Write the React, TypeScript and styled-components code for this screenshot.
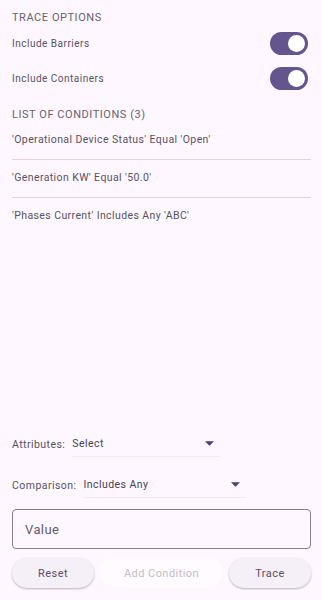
import styled, {createGlobalStyle} from 'styled-components';

const GlobalStyle = createGlobalStyle`
  html, body {
    margin: 0;
    padding: 0;
    background: #fef7ff;
  }
  * {
    box-sizing: border-box;
  }
`;

const conditions = [
  "'Operational Device Status' Equal 'Open'",
  "'Generation KW' Equal '50.0'",
  "'Phases Current' Includes Any 'ABC'",
];

const Page = styled.div`
  height: 600px;
  display: flex;
  flex-direction: column;
  padding: 0 11px 12px 12px;
  background: #fef7ff;
  font-family: Roboto, 'Noto Sans', sans-serif;
  color: #57525f;
`;

const SectionTitle = styled.div<{$top: number}>`
  margin-top: ${(p) => p.$top}px;
  font-size: 11px;
  line-height: 16px;
  letter-spacing: 0.55px;
  text-transform: uppercase;
  color: #67626d;
`;

const OptionRow = styled.div`
  height: 35px;
  display: flex;
  align-items: center;
  justify-content: space-between;
  padding-right: 3px;
  font-size: 10px;
  letter-spacing: 0.5px;
`;

const Track = styled.div<{$on: boolean}>`
  width: 38px;
  height: 23px;
  border-radius: 12px;
  background: ${(p) => (p.$on ? '#65558f' : '#e6e0e9')};
  display: flex;
  align-items: center;
  justify-content: ${(p) => (p.$on ? 'flex-end' : 'flex-start')};
  padding: 0 3px;
`;

const Thumb = styled.div`
  width: 17px;
  height: 17px;
  border-radius: 50%;
  background: #ffffff;
`;

const ConditionList = styled.div`
  margin-top: -1px;
`;

const ConditionItem = styled.div<{$last: boolean}>`
  padding: 10px 0 ${(p) => (p.$last ? 0 : 11)}px;
  font-size: 10.5px;
  line-height: 16px;
  letter-spacing: 0.4px;
  border-bottom: ${(p) => (p.$last ? 'none' : '1px solid #dcd6e0')};
`;

const Spacer = styled.div`
  flex: 1;
`;

const FieldRow = styled.div<{$gap: number}>`
  display: flex;
  align-items: flex-end;
  margin-bottom: ${(p) => p.$gap}px;
  font-size: 10.5px;
  letter-spacing: 0.45px;
`;

const FieldLabel = styled.span`
  line-height: 16px;
  padding-bottom: 4px;
  margin-right: 7px;
`;

const Dropdown = styled.div<{$width: number}>`
  width: ${(p) => p.$width}px;
  height: 24px;
  display: flex;
  align-items: center;
  justify-content: space-between;
  padding: 0 6px 3px 0;
  border-bottom: 1px solid #f0eaf2;
  color: #46414f;
`;

const Caret = styled.svg`
  width: 9px;
  height: 5px;
  fill: #4a3d73;
`;

const ValueBox = styled.div`
  height: 40px;
  border: 1px solid #85808a;
  border-radius: 4px;
  display: flex;
  align-items: center;
  padding: 0 12px;
  font-size: 13px;
  letter-spacing: 0.4px;
  color: #625d69;
  margin-bottom: 9px;
`;

const ButtonBar = styled.div`
  display: flex;
  gap: 6px;
`;

const Button = styled.button<{$width: number; $disabled?: boolean}>`
  width: ${(p) => p.$width}px;
  height: 30px;
  border: 0;
  border-radius: 15px;
  font-family: Roboto, 'Noto Sans', sans-serif;
  font-size: 11px;
  letter-spacing: 0.45px;
  cursor: pointer;
  background: ${(p) => (p.$disabled ? '#fffbff' : '#f5eff8')};
  color: ${(p) => (p.$disabled ? '#c2bdc6' : '#57525f')};
  box-shadow: ${(p) =>
    p.$disabled ? 'none' : '0 1px 2px rgba(0, 0, 0, 0.22), 0 1px 3px rgba(0, 0, 0, 0.07)'};
`;

const Toggle = ({on}: {on: boolean}) => (
  <Track $on={on}>
    <Thumb />
  </Track>
);

const DropIcon = () => (
  <Caret viewBox="0 0 10 5">
    <path d="M0 0 L10 0 L5 5 Z" />
  </Caret>
);

const App = () => {
  return (
    <>
      <GlobalStyle />
      <Page>
        <SectionTitle $top={10}>Trace Options</SectionTitle>
        <OptionRow>
          Include Barriers
          <Toggle on />
        </OptionRow>
        <OptionRow>
          Include Containers
          <Toggle on />
        </OptionRow>
        <SectionTitle $top={11}>List of Conditions (3)</SectionTitle>
        <ConditionList>
          {conditions.map((c, i) => (
            <ConditionItem key={c} $last={i === conditions.length - 1}>
              {c}
            </ConditionItem>
          ))}
        </ConditionList>
        <Spacer />
        <FieldRow $gap={17}>
          <FieldLabel>Attributes:</FieldLabel>
          <Dropdown $width={148}>
            Select
            <DropIcon />
          </Dropdown>
        </FieldRow>
        <FieldRow $gap={11}>
          <FieldLabel>Comparison:</FieldLabel>
          <Dropdown $width={163}>
            Includes Any
            <DropIcon />
          </Dropdown>
        </FieldRow>
        <ValueBox>Value</ValueBox>
        <ButtonBar>
          <Button $width={82}>Reset</Button>
          <Button $width={123} $disabled>
            Add Condition
          </Button>
          <Button $width={82}>Trace</Button>
        </ButtonBar>
      </Page>
    </>
  );
};

export default App;
